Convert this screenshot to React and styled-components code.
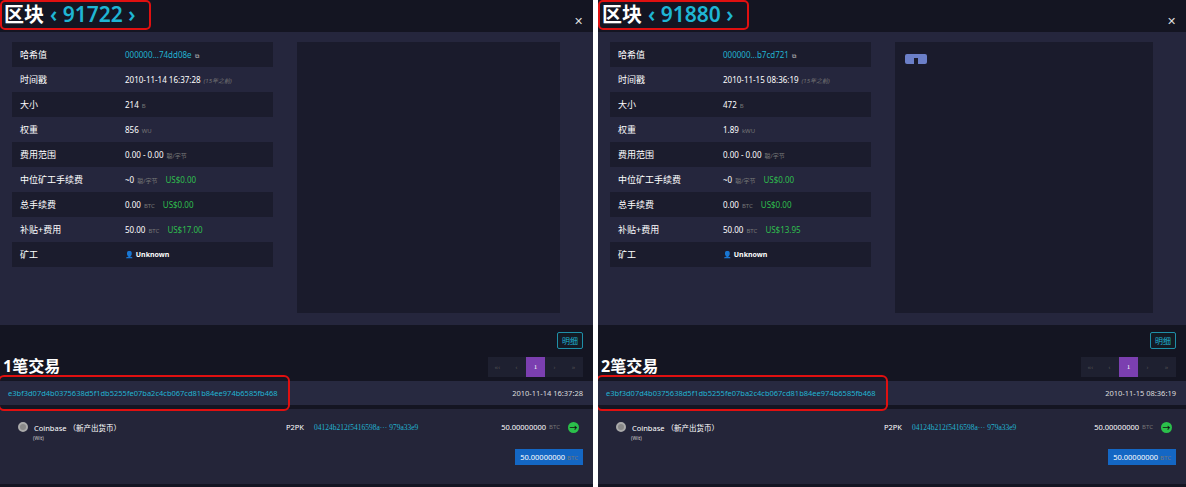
import React from "react";
import styled, { createGlobalStyle } from "styled-components";

const G = createGlobalStyle`
  html,body{margin:0;padding:0;background:#fff;}
  body{font-family:"Noto Sans","Noto Sans CJK SC",sans-serif;}
`;
const Wrap = styled.div`display:flex;gap:5px;width:1186px;height:487px;overflow:hidden;`;
const Panel = styled.div`width:${p=>p.w}px;height:487px;background:#141522;display:flex;flex-direction:column;position:relative;overflow:hidden;`;
const Head = styled.div`height:32px;display:flex;align-items:center;padding:0 4px;position:relative;`;
const Title = styled.div`font-size:20px;font-weight:700;color:#fff;display:flex;align-items:center;gap:6px;line-height:1;
  border:2px solid #e01010;border-radius:5px;padding:2px 14px 3px 2px;margin-left:-4px;margin-top:-2px;`;
const Num = styled.span`color:#1fb6d4;font-weight:600;font-size:21px;`;
const Close = styled.span`position:absolute;right:10px;top:13px;color:#ddd;font-size:11px;`;
const Body = styled.div`height:293px;background:#25263d;display:flex;padding:10px 33px 12px 12px;gap:24px;box-sizing:border-box;`;
const Table = styled.div`width:261px;display:flex;flex-direction:column;`;
const Row = styled.div`height:25px;display:flex;align-items:center;background:${p=>p.odd?"#1b1c2d":"transparent"};font-size:8px;color:#fff;`;
const Key = styled.div`width:105px;padding-left:8px;font-size:9px;`;
const Val = styled.div`display:flex;align-items:baseline;gap:3px;`;
const Unit = styled.span`color:#777;font-size:6px;`;
const Green = styled.span`color:#2fbf4e;margin-left:5px;`;
const Link = styled.span`color:#22b3d0;`;
const Chart = styled.div`flex:1;background:#1a1b2c;position:relative;`;
const Mid = styled.div`height:30px;display:flex;justify-content:flex-end;align-items:center;padding-right:10px;`;
const Btn = styled.div`border:1px solid #1f8fa8;color:#1fb6d4;font-size:8px;padding:2px 4px;border-radius:2px;background:#141a24;`;
const TxHead = styled.div`display:flex;justify-content:space-between;align-items:flex-end;padding:0 10px 0 3px;height:22px;`;
const TxTitle = styled.div`color:#fff;font-size:16px;font-weight:700;`;
const Pager = styled.div`display:flex;background:#1e2030;`;
const Pg = styled.div`width:19px;height:20px;display:flex;align-items:center;justify-content:center;font-size:7px;color:${p=>p.on?"#fff":"#555"};background:${p=>p.on?"#7b3fb0":"transparent"};font-family:"Liberation Serif",serif;`;
const TxRow = styled.div`margin-top:4px;height:24px;background:#272940;display:flex;align-items:center;justify-content:space-between;padding:0 10px 0 8px;font-size:7.5px;color:#fff;position:relative;`;
const Oval = styled.div`position:absolute;left:-2px;top:-6px;width:${p=>p.w}px;height:32px;border:2px solid #e01010;border-radius:6px;`;
const Detail = styled.div`margin-top:4px;height:75px;background:#242539;display:flex;flex-direction:column;padding:10px 14px 0 18px;font-size:7.5px;color:#fff;box-sizing:border-box;`;
const DLine = styled.div`display:flex;align-items:center;height:16px;`;
const Coin = styled.span`width:10px;height:10px;border-radius:50%;background:#888;margin-right:6px;border:2px solid #aaa;box-sizing:border-box;`;
const Left = styled.span`width:268px;display:flex;align-items:center;`;
const Mid2 = styled.span`width:200px;display:flex;align-items:center;`;
const Badge = styled.span`font-size:5px;color:#ccc;margin-left:15px;`;
const Mono = styled.span`color:#22b3d0;font-family:"Liberation Serif",serif;margin-left:10px;`;
const GreenDot = styled.span`width:11px;height:11px;border-radius:50%;background:#2bc04b;color:#111;font-size:8px;display:flex;align-items:center;justify-content:center;margin-left:8px;font-weight:700;`;
const Total = styled.div`align-self:flex-end;background:#1467c4;padding:3px 5px;margin-top:8px;margin-right:-4px;`;

function Block({w, num, hash, time, size, sizeU, weight, wu, sub, fee, tx, icon}){
  const rows=[
    ["哈希值",<Val><Link>{hash}</Link><Unit style={{color:"#ccc"}}>⧉</Unit></Val>],
    ["时间戳",<Val>{time}<Unit style={{fontStyle:"italic"}}>(15年之前)</Unit></Val>],
    ["大小",<Val>{size}<Unit>{sizeU}</Unit></Val>],
    ["权重",<Val>{weight}<Unit>{wu}</Unit></Val>],
    ["费用范围",<Val>0.00 - 0.00<Unit>聪/字节</Unit></Val>],
    ["中位矿工手续费",<Val>~0<Unit>聪/字节</Unit><Green>US$0.00</Green></Val>],
    ["总手续费",<Val>0.00<Unit>BTC</Unit><Green>US$0.00</Green></Val>],
    ["补贴+费用",<Val>50.00<Unit>BTC</Unit><Green>{sub}</Green></Val>],
    ["矿工",<Val style={{fontWeight:700,fontSize:7}}>👤 Unknown</Val>],
  ];
  return (
    <Panel w={w}>
      <Head><Title>区块<Num>‹ {num} ›</Num></Title><Close>✕</Close></Head>
      <Body>
        <Table>{rows.map((r,i)=><Row key={i} odd={i%2===0}><Key>{r[0]}</Key>{r[1]}</Row>)}</Table>
        <Chart>{icon && <svg style={{position:"absolute",left:10,top:12}} width="22" height="10"><rect width="22" height="10" rx="2" fill="#6b7fc8"/><rect x="9" y="4" width="4" height="6" fill="#1a1b2c"/></svg>}</Chart>
      </Body>
      <Mid><Btn>明细</Btn></Mid>
      <TxHead><TxTitle>{tx}笔交易</TxTitle>
        <Pager><Pg>«‹</Pg><Pg>‹</Pg><Pg on>1</Pg><Pg>›</Pg><Pg>»</Pg></Pager></TxHead>
      <TxRow><Oval w={288}/><Link>e3bf3d07d4b0375638d5f1db5255fe07ba2c4cb067cd81b84ee974b6585fb468</Link><span style={{color:"#ddd"}}>{time}</span></TxRow>
      <Detail>
        <DLine><Left><Coin/>Coinbase （新产出货币）</Left><Mid2>P2PK<Mono>04124b212f5416598a··· 979a33e9</Mono></Mid2><span style={{flex:1}}/>50.00000000<Unit style={{marginLeft:3}}>BTC</Unit><GreenDot>→</GreenDot></DLine>
        <Badge>(Wit)</Badge>
        <Total>50.00000000 <Unit>BTC</Unit></Total>
      </Detail>
    </Panel>
  );
}

export default function App(){
  return (<><G/><Wrap>
    <Block w={593} num="91722" hash="000000...74dd08e" time="2010-11-14 16:37:28" size="214" sizeU="B" weight="856" wu="WU" sub="US$17.00" tx="1"/>
    <Block w={588} num="91880" hash="000000...b7cd721" time="2010-11-15 08:36:19" size="472" sizeU="B" weight="1.89" wu="kWU" sub="US$13.95" tx="2" icon/>
  </Wrap></>);
}
